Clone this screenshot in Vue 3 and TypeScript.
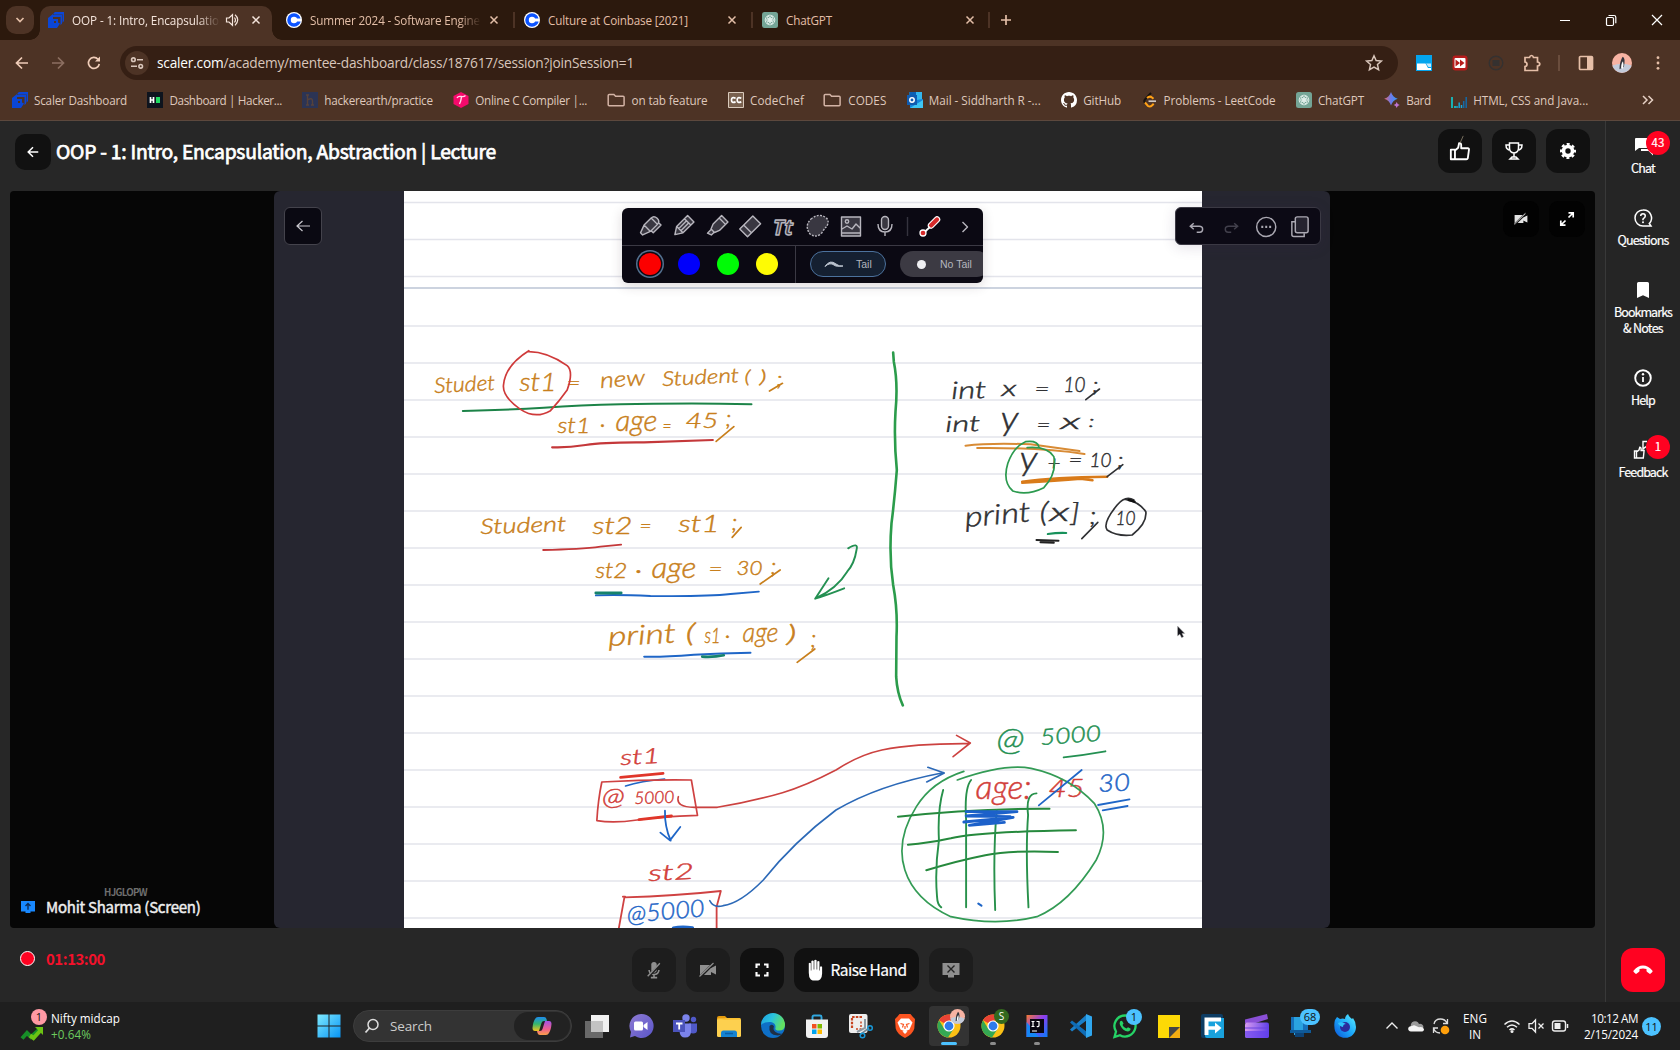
<script setup lang="ts">
// Spreads or tightens the letters of a label so that it takes up the given width.
const vFit = {
  mounted(el: HTMLElement, binding: { value: number }) {
    const natural = el.getBoundingClientRect().width
    const count = (el.textContent || '').trim().length
    if (count > 0) el.style.letterSpacing = `${(binding.value - natural) / count}px`
  },
}

interface Icon { box: string; body: string }

const chatgpt = '<rect width="16" height="16" rx="2.5" fill="#74a596"/><g fill="none" stroke="#e9f4f0" stroke-width=".8"><circle cx="8" cy="8" r="2"/><ellipse cx="8" cy="5.3" rx="2.6" ry="2.2"/><ellipse cx="8" cy="5.3" rx="2.6" ry="2.2" transform="rotate(60 8 8)"/><ellipse cx="8" cy="5.3" rx="2.6" ry="2.2" transform="rotate(120 8 8)"/><ellipse cx="8" cy="5.3" rx="2.6" ry="2.2" transform="rotate(180 8 8)"/><ellipse cx="8" cy="5.3" rx="2.6" ry="2.2" transform="rotate(240 8 8)"/><ellipse cx="8" cy="5.3" rx="2.6" ry="2.2" transform="rotate(300 8 8)"/></g>'
const folder = '<path d="M.2 3.400q0-1 1-1h4.700l1.700 1.800h7.500q1 0 1 1v7.500q0 1-1 1H1.200q-1 0-1-1z" fill="none" stroke="#d3b3a5" stroke-width="1.500"/>'
const chrome = '<circle cx="12" cy="12" r="11.500" fill="#fbc116"/><path d="M12 12L2 6.300A11.500 11.500 0 0 1 22.200 6.500H12z" fill="#ea4335"/><path d="M2 6.300A11.500 11.500 0 0 0 11 23.500L16.500 15 12 12 7 14.500z" fill="#34a853"/><circle cx="12" cy="12" r="5.600" fill="#fff"/><circle cx="12" cy="12" r="4.400" fill="#2f7bea"/>'
const penguin = '<circle cx="8" cy="8" r="8" fill="#f7b3a3"/><path d="M.3 10Q8 7 15.700 10A8 8 0 0 1 .3 10z" fill="#c3cbda"/><path d="M6 13q0-6 2.500-10 2.500 1 1 8z" fill="#33343c"/><path d="M7.300 12q0-4 1.500-5.500 1 3-.2 6z" fill="#fff"/>'
const camOff = '<path d="M2 5h11v3l5-2.500v9L13 12v3H2z" fill="currentColor"/><path d="M2 17L16 3" stroke="#1b1b1b" stroke-width="2.600"/><path d="M1.500 16.500L15.500 3" stroke="currentColor" stroke-width="1.200"/>'

const icons: Record<string, Icon> = {
  scaler: { box: '0 0 16 16', body: '<path d="M5.500 1.200L7 0h9v9l-1.500 1.800V2.300H5.500z" fill="#0b46d6"/><path d="M4.700 3.300L6 2.400h8v9l-1.500 1.800V5H4z" fill="#0b46d6"/><path d="M0 6l5-4v5H4v6h6v-2.500l2 1L9 16H0z" fill="#0b46d6"/><path d="M5 8h4v4H5z" fill="none" stroke="#0b46d6" stroke-width="2"/>' },
  coinbase: { box: '0 0 16 16', body: '<circle cx="8" cy="8" r="8" fill="#fff"/><circle cx="8" cy="8" r="5" fill="none" stroke="#0b53ff" stroke-width="3.600"/><path d="M9 6.500h6v3H9z" fill="#fff"/>' },
  chatgpt: { box: '0 0 16 16', body: chatgpt },
  hr: { box: '0 0 16 16', body: '<path d="M0 0h16v16H0z" fill="#0e141e"/><path d="M3.500 5v6M6.500 5v6M3 8h4" stroke="#fff" stroke-width="1.700"/><path d="M9 5h4v6H9z" fill="#1fdc62"/>' },
  he: { box: '0 0 16 16', body: '<path d="M0 0h16v16H0z" fill="#2c3454"/><path d="M5.500 3v10M5.500 8q5-3 5 1v4M4 3h3M4 13h3M9 13h3" fill="none" stroke="#56423b" stroke-width="1.400"/>' },
  compiler: { box: '0 0 16 16', body: '<path d="M8 0l7.500 4v8L8 16 .5 12V4z" fill="#f50a6c"/><path d="M4 6q1-2 4-1.500 3 .5 4.500-1M8.500 5Q8 9 6.500 12" fill="none" stroke="#ffd9e8" stroke-width="1.400"/>' },
  folder: { box: '0 0 16 16', body: folder },
  cc: { box: '0 0 16 16', body: '<path d="M.5.5h15v15H.5z" fill="#79614f" stroke="#d9cabc"/><path d="M7.600 6.200Q3.500 4.500 3.500 8t4.100 1.900M13.300 6.200Q9.200 4.500 9.200 8t4.100 1.900" fill="none" stroke="#fff" stroke-width="1.700"/>' },
  outlook: { box: '0 0 16 16', body: '<path d="M2.500 0H15v8H2.500z" fill="#33b6ee"/><path d="M2.500 0H9v5H2.500z" fill="#0b5fb4"/><path d="M3 9l13-2v9H3z" fill="#1385dd"/><path d="M3 16L16 8v8z" fill="#3ec6f5"/><path d="M0 3h10v10H0z" fill="#0f5bb0"/><circle cx="5" cy="8" r="2.200" fill="none" stroke="#fff" stroke-width="1.500"/>' },
  github: { box: '0 0 16 16', body: '<path fill="#fff" d="M8 0C3.580 0 0 3.580 0 8c0 3.540 2.290 6.530 5.470 7.590.4.070.55-.17.55-.38 0-.19-.01-.82-.01-1.490-2.010.37-2.530-.49-2.690-.94-.09-.23-.48-.94-.82-1.130-.28-.15-.68-.52-.01-.53.63-.01 1.080.58 1.230.82.72 1.210 1.870.87 2.330.66.070-.52.28-.87.51-1.070-1.780-.2-3.640-.89-3.640-3.950 0-.87.31-1.590.82-2.150-.08-.2-.36-1.020.08-2.120 0 0 .67-.21 2.200.82.64-.18 1.320-.27 2-.27s1.360.09 2 .27c1.530-1.040 2.200-.82 2.200-.82.44 1.100.16 1.920.08 2.120.51.56.82 1.270.82 2.150 0 3.070-1.870 3.750-3.650 3.950.29.25.54.73.54 1.480 0 1.070-.01 1.930-.01 2.200 0 .21.15.46.55.38A8 8 0 0 0 16 8c0-4.420-3.580-8-8-8z"/>' },
  leet: { box: '0 0 16 16', body: '<path d="M9 1L3 7.500q-1.500 1.700 0 3.500" fill="none" stroke="#15110f" stroke-width="2"/><path d="M3 10.500L6 14q2 1.500 4.500-1l1.200-1.200M5 6q2.800-2.500 5-.5l1.500 1.300" fill="none" stroke="#ffa116" stroke-width="2"/><path d="M6.500 9.200H14" stroke="#cfc8c3" stroke-width="1.700"/>' },
  bard: { box: '0 0 16 16', body: '<defs><linearGradient id="bard"><stop offset="0" stop-color="#e06a74"/><stop offset=".5" stop-color="#6d7bea"/><stop offset="1" stop-color="#2f9bf5"/></linearGradient></defs><path d="M7 0Q8.500 5 13.700 6.700 8.500 8.500 7 13.400 5.500 8.500.2 6.700 5.500 5 7 0z" fill="url(#bard)"/><path d="M12.700 10q.6 2.400 3 3-2.400.6-3 3-.6-2.400-3-3 2.400-.6 3-3z" fill="#c074d3"/>' },
  bars: { box: '0 0 16 16', body: '<path d="M1 5v11M4 14v2" stroke="#14bfc2" stroke-width="1.800"/><path d="M6 14v2M8.200 10.500V16M10.500 13v3" stroke="#1aa6d8" stroke-width="1.500"/><path d="M12.700 9v7M15.200 5v11" stroke="#1469a8" stroke-width="1.500"/>' },
  back: { box: '0 0 16 16', body: '<path d="M14 8H2.500M8 2.500L2.500 8 8 13.500" fill="none" stroke="currentColor" stroke-width="1.700"/>' },
  thinBack: { box: '0 0 16 16', body: '<path d="M15 8H2M7.500 3L2 8l5.500 5" fill="none" stroke="currentColor" stroke-width="1.200"/>' },
  forward: { box: '0 0 16 16', body: '<path d="M2 8h11.500M8 2.500L13.500 8 8 13.500" fill="none" stroke="currentColor" stroke-width="1.700"/>' },
  reload: { box: '0 0 16 16', body: '<path d="M13.300 9A5.500 5.500 0 1 1 12 4.200" fill="none" stroke="currentColor" stroke-width="1.700"/><path d="M14 1.500v5H9z" fill="currentColor"/>' },
  tune: { box: '0 0 16 16', body: '<g fill="none" stroke="currentColor" stroke-width="1.600"><circle cx="4.400" cy="4.700" r="1.800"/><path d="M8 4.700h6M2 11.300h6"/><circle cx="11.700" cy="11.300" r="1.800"/></g>' },
  star: { box: '0 0 16 16', body: '<path d="M8 1.500l1.900 4.300 4.700.5L11.100 9.400l1 4.600L8 11.600 3.900 14l1-4.600L1.400 6.300l4.700-.5z" fill="none" stroke="currentColor" stroke-width="1.300"/>' },
  down: { box: '0 0 16 16', body: '<path d="M4.500 6L8 9.500 11.500 6" fill="none" stroke="currentColor" stroke-width="1.700"/>' },
  close: { box: '0 0 16 16', body: '<path d="M4.500 4.500l7 7m0-7l-7 7" stroke="currentColor" stroke-width="1.500"/>' },
  plus: { box: '0 0 16 16', body: '<path d="M8 3v10M3 8h10" stroke="currentColor" stroke-width="1.700"/>' },
  speaker: { box: '0 0 16 16', body: '<path d="M2.500 6h2.500l3.500-3.300v10.600L5 10H2.500z" fill="none" stroke="currentColor" stroke-width="1.200"/><path d="M10.500 5.500q2 2.500 0 5M11 2.700q5.500 4.600 0 10.600" fill="none" stroke="currentColor" stroke-width="1.200"/>' },
  min: { box: '0 0 16 16', body: '<path d="M3 8.500h10" stroke="#fff"/>' },
  restore: { box: '0 0 16 16', body: '<rect x="3.500" y="5.500" width="7" height="8" rx="1.200" fill="none" stroke="#fff" stroke-width="1.200"/><path d="M5.500 3.500H11q1.800 0 1.800 1.800v6" fill="none" stroke="#fff" stroke-width="1.200"/>' },
  winclose: { box: '0 0 16 16', body: '<path d="M3 3l10 10M13 3L3 13" stroke="#fff" stroke-width="1.200"/>' },
  extBlue: { box: '0 0 16 16', body: '<path d="M0 0h16v16H0z" fill="#04a5ee"/><path d="M1 8.500h8.500L12 13h3v2H1z" fill="#fff"/><path d="M10 8.500h5V12h-2.500z" fill="#c3e9fb"/>' },
  extRed: { box: '0 0 16 16', body: '<rect x=".5" y=".5" width="15" height="15" rx="3" fill="#b71c1c"/><rect x="2.500" y="3" width="11" height="10" rx="1" fill="#fff"/><path d="M3.500 4.500L8 8l-4.500 3.500zM8 4.500L12.500 8 8 11.500z" fill="#b71c1c"/>' },
  extDark: { box: '0 0 16 16', body: '<circle cx="8" cy="8" r="6.800" fill="none" stroke="#353130" stroke-width="1.400"/><path d="M4.500 5h7v6h-7z" fill="#353130"/>' },
  puzzle: { box: '0 0 18 18', body: '<path d="M2 3.500h4.500Q7 1.500 8.500 1.500t2 2h4v4.500q2.300.3 2.300 2t-2.300 2v4.500H2v-4q2-.3 2-2.300t-2-2.200z" fill="none" stroke="#e6bfa8" stroke-width="1.700"/>' },
  panel: { box: '0 0 16 16', body: '<rect x="1.500" y="1.500" width="13" height="13" rx="1" fill="none" stroke="#e6bfa8" stroke-width="1.700"/><path d="M9 2h5.500v12H9z" fill="#e6bfa8"/>' },
  dots: { box: '0 0 16 16', body: '<g fill="#e6bfa8"><circle cx="8" cy="2.700" r="1.400"/><circle cx="8" cy="8" r="1.400"/><circle cx="8" cy="13.300" r="1.400"/></g>' },
  penguin: { box: '0 0 16 16', body: penguin },
  more: { box: '0 0 16 16', body: '<path d="M3 4l4 4-4 4M8.500 4l4 4-4 4" fill="none" stroke="#e6d1c5" stroke-width="1.500"/>' },
  thumb: { box: '0 0 24 24', body: '<path d="M2 10.500h4.500v10.500H2zM6.500 11.500l3.500-3 1-5q2.300-.3 2.300 2V9h7.200q1.500 0 1.300 1.500L20.500 20q-.3 1-1.500 1H6.500" fill="none" stroke="#fff" stroke-width="2" stroke-linejoin="round"/><path d="M12 3.500L15.500-4.500" stroke="#9a8f78" stroke-width=".8"/>' },
  trophy: { box: '0 0 20 20', body: '<path d="M5.500 2h9v5q0 4.500-4.500 5-4.500-.5-4.500-5zM5.500 4H2q0 5 4.500 5.200M14.500 4H18q0 5-4.500 5.200M10 12v4M6 18h8l-2-2H8z" fill="none" stroke="#fff" stroke-width="1.500"/>' },
  gear: { box: '0 0 20 20', body: '<circle cx="10" cy="10" r="5" fill="none" stroke="#fff" stroke-width="4"/><circle cx="10" cy="10" r="7.700" fill="none" stroke="#fff" stroke-width="2.400" stroke-dasharray="3.350 2.698" stroke-dashoffset="1.675"/>' },
  camOff: { box: '0 0 20 20', body: camOff },
  expand: { box: '0 0 16 16', body: '<path d="M9.500 1.800h4.700v4.700M14 2L9.500 6.500M6.500 14.200H1.800V9.500M2 14l4.500-4.500" fill="none" stroke="#fff" stroke-width="1.700"/>' },
  micOff: { box: '0 0 20 20', body: '<path d="M7 4a3 3 0 0 1 6 0v6a3 3 0 0 1-6 0z" fill="currentColor"/><path d="M4.500 10q.5 5 5.500 5t5.500-5M10 15v3M6.500 18.500h7" fill="none" stroke="currentColor" stroke-width="1.800"/><path d="M4 17L17 3.500" stroke="#1d1d1d" stroke-width="2.800"/><path d="M3 17L16.500 2.500" stroke="currentColor" stroke-width="1.500"/>' },
  full: { box: '0 0 16 16', body: '<path d="M2.500 6V2.500H6M10 2.500h3.500V6M13.500 10v3.500H10M6 13.500H2.500V10" fill="none" stroke="#fff" stroke-width="2.100"/>' },
  hand: { box: '0 0 18 24', body: '<path d="M2 4.500q1.500-1.200 2.300 0v8h.6V2q1.400-1.500 2.600 0v9.500h.7V1q1.400-1.200 2.600 0v10.500h.7V2.500q1.300-1.300 2.500 0v10h.6V8.500q1.200-1.500 2.400 0V16q0 4-2 6.500-1 1.300-2.500 1.300H6.500q-1.500 0-2.500-1.300Q2 20 2 15z" fill="#fff"/>' },
  shareOff: { box: '0 0 20 20', body: '<path d="M1.500 3h17v12H13v2.500H7V15H1.500z" fill="currentColor"/><path d="M6.500 5.500l7 7m0-7l-7 7" stroke="#242424" stroke-width="1.400"/>' },
  share: { box: '0 0 14 14', body: '<path d="M0 1h14v10.500H9.500v1.500h-5v-1.500H0z" fill="#1888ff"/><path d="M7 9.800V3.500M4.500 6L7 3.500 9.500 6" fill="none" stroke="#0b2b55" stroke-width="1.400"/>' },
  phone: { box: '0 0 20 12', body: '<path d="M.7 6.500Q5 1.500 10 1.500t9.300 5q.7.800 0 1.500l-1.600 1.600q-.7.600-1.500 0l-2-1.500q-.7-.5-.7-1.400V5Q10 4 6.500 5v1.700q0 .9-.7 1.400l-2 1.500q-.8.600-1.500 0L.7 8q-.7-.7 0-1.500z" fill="#fff"/>' },
  chat: { box: '0 0 20 20', body: '<path d="M2 3q0-1 1-1h13v10H6l-4 3z" fill="#fff"/><path d="M8 14h8l3 3V6" fill="none" stroke="#fff" stroke-width="2"/>' },
  question: { box: '0 0 20 20', body: '<path d="M10 2a8 8 0 1 0 0 16h8l-1.700-2.500A8 8 0 0 0 10 2z" fill="none" stroke="#fff" stroke-width="1.500"/><path d="M7.700 8q0-2.300 2.300-2.300T12.300 8q0 1.300-2.300 3v1.200" fill="none" stroke="#fff" stroke-width="1.500"/><circle cx="10" cy="14.300" r="1" fill="#fff"/>' },
  bookmark: { box: '0 0 20 20', body: '<path d="M4 3.500Q4 2 5.500 2h9Q16 2 16 3.500V18l-6-2.700L4 18z" fill="#fff"/>' },
  help: { box: '0 0 20 20', body: '<circle cx="10" cy="10" r="7.800" fill="none" stroke="#fff" stroke-width="1.900"/><path d="M10 9v5" stroke="#fff" stroke-width="1.800"/><circle cx="10" cy="6.300" r="1.200" fill="#fff"/>' },
  feedback: { box: '0 0 20 20', body: '<path d="M1.500 11h2v7h-2zM3.500 12L6 10l.8-2.700q1.500 0 1.300 2v1.200h3l-.8 7.500H3.500M14 1.500h-4V9l2.500-2h5" fill="none" stroke="#fff" stroke-width="1.400"/>' },
  win: { box: '0 0 24 24', body: '<defs><linearGradient id="wn" x2="1" y2="1" gradientUnits="objectBoundingBox"><stop offset="0" stop-color="#7eeaff"/><stop offset="1" stop-color="#0794f5"/></linearGradient></defs><path d="M.5.5H11.500v11H.5zM12.500.5H23.500v11H12.500zM.5 12.500H11.500v11H.5zM12.500 12.500H23.500v11H12.500z" fill="url(#wn)"/>' },
  search: { box: '0 0 16 16', body: '<circle cx="9" cy="6.500" r="5" fill="none" stroke="#ddd" stroke-width="1.500"/><path d="M5.500 10L1.500 14.500" stroke="#ddd" stroke-width="1.800"/>' },
  copilot: { box: '0 0 20 20', body: '<defs><linearGradient id="cpa" x2="0" y2="1"><stop offset="0" stop-color="#1d8cf0"/><stop offset=".5" stop-color="#36b56b"/><stop offset="1" stop-color="#f3c21e"/></linearGradient><linearGradient id="cpb" x2="0" y2="1"><stop offset="0" stop-color="#a352e6"/><stop offset=".6" stop-color="#f0608a"/><stop offset="1" stop-color="#f9a04a"/></linearGradient></defs><path d="M6 1h6q2 0 2.500 2L15 5h-3q-2 0-2.500 2L7 15H3Q.5 15 .5 12 1 6 3 3 4 1 6 1z" fill="url(#cpa)"/><path d="M14 19H8q-2 0-2.500-2L5 15h3q2 0 2.500-2L13 5h4q2.500 0 2.500 3-.5 6-2.500 9-1 2-3 2z" fill="url(#cpb)"/>' },
  taskview: { box: '0 0 24 24', body: '<path d="M6 1h18v17H6z" fill="#f1f1f1"/><path d="M0 7h18v17H0z" fill="#777" opacity=".85"/><path d="M6 7h12v11H6z" fill="#c3c3c3"/>' },
  meet: { box: '0 0 24 24', body: '<defs><linearGradient id="mt" x2="1" y2="1"><stop offset="0" stop-color="#8e7bd3"/><stop offset="1" stop-color="#5a55c9"/></linearGradient></defs><path d="M12 0a12 12 0 1 1-6 22L1 23.500 2 18A12 12 0 0 1 12 0z" fill="url(#mt)"/><rect x="5" y="7.500" width="9" height="9" rx="1.500" fill="#fff"/><path d="M14.500 11l4-3v8l-4-3z" fill="#fff"/>' },
  teams: { box: '0 0 24 24', body: '<circle cx="13" cy="4" r="3.700" fill="#7b83eb"/><circle cx="20.500" cy="5.500" r="2.700" fill="#5059c9"/><path d="M16 9.500h8v7q0 3-4 3-3 0-4-2z" fill="#5059c9"/><path d="M7 9.500h11v8q0 6-6 6-5 0-5.500-6z" fill="#7b83eb"/><path d="M0 6h12v12H0z" fill="#4b53bc"/><path d="M3 9.500h6.500M6.200 9.500v6" stroke="#fff" stroke-width="1.800"/>' },
  explorer: { box: '0 0 24 24', body: '<path d="M0 4q0-2 2-2h6l3 3H0z" fill="#e59a0c"/><rect y="4.500" width="24" height="18.500" rx="1.500" fill="#fdd04f"/><path d="M0 6V5q5 2 9-1h13.500q1.500 0 1.500 1.500z" fill="#fbc02f"/><path d="M4 23v-4q0-2.500 2.500-2.500h11Q20 16.500 20 19v4z" fill="#1583d1"/><path d="M8 19.500h8" stroke="#0b5ea6" stroke-width="1.500"/>' },
  edge: { box: '0 0 24 24', body: '<defs><linearGradient id="ed" x2="1" y2=".4"><stop offset="0" stop-color="#1b9de2"/><stop offset=".5" stop-color="#2ac3dd"/><stop offset="1" stop-color="#63e060"/></linearGradient></defs><circle cx="12" cy="12" r="12" fill="#0e6fc7"/><path d="M0 11A12 12 0 0 1 24 11q0 5.500-6 5.500-4.500 0-3.500-3Q15 9 10 8 3 7.500 0 11z" fill="url(#ed)"/><path d="M8.500 12q-1.500 9 8 9.500 3 0 5-2-4 .7-7-1.500-3-2.500-1.500-5.500Q11.500 9.500 8.500 12z" fill="#1f2f45"/>' },
  store: { box: '0 0 24 24', body: '<path d="M7.500 7V3q0-1.500 1.500-1.500h6q1.500 0 1.500 1.500v4" fill="none" stroke="#31a8e0" stroke-width="1.900"/><path d="M1 5.500h22V21q0 3-3 3H4q-3 0-3-3z" fill="#f2f2f2"/><path d="M7 10h4.500v4.500H7z" fill="#f25022"/><path d="M12.500 10H17v4.500h-4.500z" fill="#7fba00"/><path d="M7 15.500h4.500V20H7z" fill="#00a4ef"/><path d="M12.500 15.500H17V20h-4.500z" fill="#ffb900"/>' },
  snip: { box: '0 0 24 24', body: '<rect width="18.500" height="19" rx="2" fill="#eee"/><path d="M3 14V3h11" fill="none" stroke="#c74420" stroke-width="2.200" stroke-dasharray="2.500 1.200"/><path d="M7 15h5V7" fill="none" stroke="#c74420" stroke-width="1.500" stroke-dasharray="2 1.500"/><path d="M16 5v9l-8 4" fill="none" stroke="#8c98a2" stroke-width="2"/><path d="M12 20l8-6" stroke="#738490" stroke-width="1.600"/><circle cx="21" cy="14" r="2.300" fill="none" stroke="#1898d8" stroke-width="1.500"/><circle cx="13.500" cy="21.500" r="2.300" fill="none" stroke="#1898d8" stroke-width="1.500"/>' },
  brave: { box: '0 0 24 24', body: '<path d="M6.500 0h11l2 2.500L22 5l-.7 9.500Q20 20 12 24 4 20 2.700 14.500L2 5l2.500-2.500z" fill="#fb5420"/><path d="M8 4.500h8l3.500 4-3 7-4.500 2-4.500-2-3-7z" fill="#fff"/><path d="M7.500 9.500l3 1-1 3M16.500 9.500l-3 1 1 3M12 12v3" fill="none" stroke="#fb5420" stroke-width="1.200"/><path d="M9.500 17.500l2.500-1 2.500 1L12 20z" fill="#fff"/>' },
  chrome: { box: '0 0 24 24', body: chrome },
  idea: { box: '0 0 24 24', body: '<defs><linearGradient id="ij" x2="1" y2="1"><stop offset="0" stop-color="#f97a2f"/><stop offset=".45" stop-color="#8b3df0"/><stop offset="1" stop-color="#087cfa"/></linearGradient></defs><path d="M1.500 1h21v22h-21z" fill="url(#ij)"/><path d="M1.500 8v15H14z" fill="#1587f5"/><path d="M5 5h14v14H5z" fill="#0a0610"/><path d="M6.500 7.500H9.500M8 7.500v5M6.500 12.500H9.500M11.500 7.500H14v4q0 1.300-2.300 1M7 17h5" fill="none" stroke="#fff" stroke-width="1.200"/>' },
  vscode: { box: '0 0 24 24', body: '<path d="M17 1L1 15.500l2 2L22 3z" fill="#1a7fc8"/><path d="M17 23L1 8.500l2-2L22 21z" fill="#0f6cb5"/><path d="M17 0l6 2.500v19L17 24z" fill="#2fa7ef"/><path d="M17 7.500L11 12l6 4.500z" fill="#202020"/>' },
  whatsapp: { box: '0 0 24 24', body: '<path d="M12 1.500a10.500 10.500 0 1 1-5 19.700L1.500 23 3 17.500A10.500 10.500 0 0 1 12 1.500z" fill="none" stroke="#25d366" stroke-width="2.300"/><path d="M7 7.500q2-2 3 1l.5 1-1 1.500q1 2.500 4 3.500l1.500-1.300 2.500 1.300q.5 2-2.500 3Q10 17 7 11q-.7-2 0-3.500z" fill="#25d366"/>' },
  sticky: { box: '0 0 24 24', body: '<path d="M1 1h22v12L12 24H1z" fill="#fdd906"/><path d="M12 13h11v11H12z" fill="#f4ad12"/><path d="M12 13h11L12 24z" fill="#454545"/>' },
  filmora: { box: '0 0 24 24', body: '<rect width="22" height="24" x="0" rx="2" fill="#0d3c63"/><path d="M4 4h19v20H6q-2 0-2-2z" fill="#19a2dd"/><path d="M5.500 21V5.500H20" fill="none" stroke="#fff" stroke-width="4"/><path d="M6 14h10" stroke="#fff" stroke-width="3.500"/><path d="M14 8.500l6.500 5.500-6.500 5.500z" fill="#fff"/>' },
  clip: { box: '0 0 24 24', body: '<defs><linearGradient id="cl" x2="1"><stop offset="0" stop-color="#d89af0"/><stop offset="1" stop-color="#5e3fe8"/></linearGradient></defs><path d="M0 5.500L22 0l1 5-12.500 4H0z" fill="#8a4fd6"/><rect y="8.500" width="24" height="15.500" rx="2" fill="url(#cl)"/><path d="M0 14h24" stroke="#6a42df" stroke-width="1"/><path d="M0 17h24v5q0 2-2 2H2q-2 0-2-2z" fill="#6440ee" opacity=".7"/>' },
  phoneLink: { box: '0 0 24 24', body: '<path d="M2 3h17v15H2z" fill="#1671bb"/><path d="M5 3h9v18H5z" fill="#2aa3e0"/><path d="M1 16h21v3H1z" fill="#0f5a99"/><path d="M6 19h9v4H6z" fill="#0d4478"/>' },
  firefox: { box: '0 0 24 24', body: '<defs><linearGradient id="ff" x1="1" x2="0" y2="1"><stop offset="0" stop-color="#5ff2ff"/><stop offset=".5" stop-color="#1ca8fa"/><stop offset="1" stop-color="#0b52d6"/></linearGradient></defs><path d="M2 6l2-3 3 2q3-1 5 0 0-3 3-5 1 3 4 5l1-1q3 4 3 9a10.800 10.800 0 0 1-21.600 0Q1 9 2 6z" fill="url(#ff)"/><circle cx="12" cy="13" r="5" fill="#2a2b9e"/><path d="M5 9q4-2 8 1-3 0-3 3-4-1-5-4z" fill="#2ec3fb"/>' },
  up: { box: '0 0 16 16', body: '<path d="M2.500 10.500L8 5l5.500 5.500" fill="none" stroke="#eee" stroke-width="1.400"/>' },
  cloud: { box: '0 0 16 16', body: '<path d="M3 9a4 4 0 0 1 8-3 3.500 3.500 0 0 1 4.500 3.500l-3 2z" fill="#9a9a9a"/><path d="M3 13.500Q0 13 .2 10.500T4 8q2-1.500 4 0l3 1.200q4-1 5 2 0 2.300-3 2.300z" fill="#f5f5f5"/>' },
  sync: { box: '0 0 18 18', body: '<path d="M2 7Q3 2 8.500 2 13 2 15 6M15.500 2v4.500H11M8 16q-5 0-6.500-5M1.500 16v-5H6" fill="none" stroke="#ddd" stroke-width="1.300"/><circle cx="13" cy="13" r="4.300" fill="#ff9f0a"/>' },
  wifi: { box: '0 0 18 16', body: '<g fill="none" stroke="#eee" stroke-width="1.500"><path d="M1.500 6.500q7.500-7 15 0M4 9.300q5-4.600 10 0M6.500 12q2.500-2.300 5 0"/></g><circle cx="9" cy="13.500" r="1.500" fill="#eee"/>' },
  mute: { box: '0 0 18 16', body: '<path d="M2 5.700h3L8.500 2v12L5 10.300H2z" fill="none" stroke="#eee" stroke-width="1.300"/><path d="M11.500 5.500l5 5m0-5l-5 5" stroke="#eee" stroke-width="1.300"/>' },
  battery: { box: '0 0 18 16', body: '<rect x="1.500" y="3" width="13" height="10" rx="2.200" fill="none" stroke="#eee" stroke-width="1.400"/><path d="M3.500 5h6v6h-6z" fill="#eee"/><path d="M16.500 6v4" stroke="#eee" stroke-width="1.500"/>' },
  stock: { box: '0 0 22 14', body: '<path d="M1 12.500L6 7l4 4 9-8" fill="none" stroke="#178f28" stroke-width="4"/><path d="M9 9.500l3.500 2.500L19 5" fill="none" stroke="#6cc313" stroke-width="4"/><path d="M14 1h8v8z" fill="#6cc313"/>' },
}

const tabs = [
  { icon: 'scaler', title: 'OOP - 1: Intro, Encapsulatio', w: 147, room: 148, fade: true, active: true },
  { icon: 'coinbase', title: 'Summer 2024 - Software Engine', w: 170, room: 171, fade: true, active: false },
  { icon: 'coinbase', title: 'Culture at Coinbase [2021]', w: 140, room: 171, fade: false, active: false },
  { icon: 'chatgpt', title: 'ChatGPT', w: 46, room: 171, fade: false, active: false },
]

const bookmarks = [
  { icon: 'scaler', text: 'Scaler Dashboard', w: 93 },
  { icon: 'hr', text: 'Dashboard | Hacker...', w: 112.5 },
  { icon: 'he', text: 'hackerearth/practice', w: 108.5 },
  { icon: 'compiler', text: 'Online C Compiler |...', w: 112 },
  { icon: 'folder', text: 'on tab feature', w: 76 },
  { icon: 'cc', text: 'CodeChef', w: 54 },
  { icon: 'folder', text: 'CODES', w: 38 },
  { icon: 'outlook', text: 'Mail - Siddharth R -...', w: 112 },
  { icon: 'github', text: 'GitHub', w: 38 },
  { icon: 'leet', text: 'Problems - LeetCode', w: 112 },
  { icon: 'chatgpt', text: 'ChatGPT', w: 46 },
  { icon: 'bard', text: 'Bard', w: 24.5 },
  { icon: 'bars', text: 'HTML, CSS and Java...', w: 115 },
]

const sidebar = [
  { icon: 'chat', lines: [['Chat', 24]], badge: '43' },
  { icon: 'question', lines: [['Questions', 51]], badge: '' },
  { icon: 'bookmark', lines: [['Bookmarks', 58], ['& Notes', 40]], badge: '' },
  { icon: 'help', lines: [['Help', 24]], badge: '' },
  { icon: 'feedback', lines: [['Feedback', 49]], badge: '1' },
] as { icon: string; lines: [string, number][]; badge: string }[]

const apps = [
  { icon: 'taskview' }, { icon: 'meet' }, { icon: 'teams' }, { icon: 'explorer' }, { icon: 'edge' },
  { icon: 'store' }, { icon: 'snip' }, { icon: 'brave' },
  { icon: 'chrome', state: 'active', mark: 'penguin' },
  { icon: 'chrome', state: 'open', mark: 'S' },
  { icon: 'idea', state: 'open' }, { icon: 'vscode' }, { icon: 'whatsapp', badge: '1' },
  { icon: 'sticky' }, { icon: 'filmora' }, { icon: 'clip' }, { icon: 'phoneLink', badge: '68' }, { icon: 'firefox' },
] as { icon: string; state?: string; mark?: string; badge?: string }[]

const rules = [202.5, 239.5, 276.5, 326, 363, 400, 437, 474, 511, 548, 585, 622, 659, 696, 733, 770, 807, 844, 881, 918]

const O = '#c87f1c', K = '#2f3033', R = '#d2403a', G = '#249052', B = '#1f66c7'
// Handwritten words on the page: text, x, baseline, width, size, ink, tilt.
const words: [string, number, number, number, number, string, number][] = [
  ['Studet', 434, 393, 61, 21, O, -3], ['st1', 519, 391, 37, 25, O, 0], ['=', 566, 390, 14, 22, O, 0],
  ['new', 600, 388, 45, 22, O, -4], ['Student', 662, 386, 77, 20, O, -3], ['(', 744, 383, 6, 18, O, 0], [')', 759, 383, 7, 18, O, 0], [';', 776, 386, 6, 20, O, 0],
  ['st1', 557, 433, 33, 22, O, 0], ['·', 599, 433, 6, 26, O, 0], ['age', 615, 431, 42, 29, O, 0], ['=', 662, 432, 9, 18, O, 0], ['45', 685, 428, 33, 22, O, 0], [';', 725, 426, 6, 22, O, 0],
  ['Student', 480, 534, 86, 21, O, -2], ['st2', 592, 534, 40, 23, O, 0], ['=', 639, 533, 12, 19, O, 0], ['st1', 678, 532, 41, 24, O, 0], [';', 731, 530, 6, 22, O, 0],
  ['st2', 595, 578, 32, 22, O, 0], ['·', 634, 580, 8, 28, O, 0], ['age', 651, 578, 45, 29, O, 0], ['=', 708, 576, 14, 21, O, 0], ['30', 736, 575, 26, 20, O, 0], [';', 770, 574, 6, 22, O, 0],
  ['print', 608, 646, 68, 27, O, -3], ['(', 685, 642, 10, 26, O, 0], ['s1', 704, 643, 16, 22, O, 0], ['·', 724, 644, 6, 24, O, 0], ['age', 742, 642, 36, 28, O, 0], [')', 786, 642, 10, 24, O, 0], [';', 810, 647, 6, 24, O, 0],
  ['int', 951, 399, 35, 24, K, -2], ['x', 1001, 396, 15, 21, K, 0], ['=', 1034, 396, 15, 22, K, 0], ['10', 1063, 392, 22, 21, K, 0], [';', 1092, 392, 6, 20, K, 0],
  ['int', 945, 432, 35, 22, K, -2], ['y', 1000, 430, 18, 33, K, 0], ['=', 1036, 432, 14, 21, K, 0], ['x', 1060, 429, 20, 21, K, 0], [':', 1088, 427, 6, 15, K, 0],
  ['y', 1019, 470, 18, 33, K, 0], ['+', 1047, 470, 13, 20, K, 0], ['=', 1068, 467, 14, 21, K, 0], ['10', 1089, 467, 22, 20, K, 0], [';', 1117, 467, 6, 20, K, 0],
  ['print', 965, 527, 66, 28, K, -5], ['(', 1039, 522, 9, 28, K, 0], ['x', 1049, 521, 20, 25, K, 0], [']', 1070, 522, 9, 26, K, 0], [';', 1089, 524, 7, 24, K, 0], ['10', 1115, 525, 20, 20, K, 0],
  ['st1', 620, 765, 40, 21, R, -3], ['@', 602, 806, 23, 24, R, -5], ['5000', 634, 804, 40, 17, R, -2], ['st2', 648, 881, 46, 22, R, -3], ['@5000', 627, 923, 78, 24, B, -5],
  ['@', 996, 750, 28, 31, G, 0], ['5000', 1040, 745, 61, 22, G, -4], ['age:', 975, 799, 56, 33, R, 0], ['45', 1048, 797, 36, 26, R, 0], ['30', 1098, 792, 32, 24, B, -3],
]

// Pen strokes, each drawn in its own thirds-of-a-pixel grid: d, ink, thickness.
const upper: [string, string, number][] = [
  ['M187 243Q320 240 430 233T660 223 960 221L1053 223', '#1c8348', 2],
  ['M385 62Q315 105 309 165 305 200 360 238 405 268 450 242 475 215 500 180 520 125 500 107 440 65 385 65', '#cf3a3a', 1.7],
  ['M455 352Q500 354 555 345T730 337L937 330', '#c4383a', 2.2],
  ['M428 660Q540 658 600 650L662 644', '#c4383a', 1.800],
  ['M586 796Q650 793 750 798 920 800 990 792L1075 785', B, 1.900],
  ['M586 789h76', '#16836c', 2.800],
  ['M731 980Q780 982 880 974 960 970 1050 968', B, 2],
  ['M905 980Q940 982 970 976', '#16836c', 2.600],
  ['M1107 183L1146 160M947 334L1000 290M995 622L1022 592M1079 762L1139 720M1190 997L1243 957', O, 1.700],
  ['M1343 655Q1375 635 1368 660 1362 700 1340 725 1310 775 1244 806L1284 745M1244 806Q1280 795 1331 775', G, 1.900],
  ['M1478 68L1480 95Q1493 160 1485 245 1480 330 1489 420 1482 510 1473 580 1465 680 1478 765 1492 840 1488 920L1487 1040Q1490 1090 1507 1126', '#2b9c4b', 2.600],
]
const right: [string, string, number][] = [
  ['M255 347Q330 338 450 343L597 363M290 354Q480 352 612 372', '#d88b35', 2],
  ['M425 455Q520 442 680 440M425 458Q530 452 600 446L636 451', '#d97b1a', 2.500],
  ['M475 350Q470 330 435 335 400 350 382 400 365 455 397 483 440 498 490 473 530 430 520 380 500 348 440 353', '#2c9a4f', 1.700],
  ['M502 612Q530 608 557 609', '#16915a', 2.200],
  ['M468 630L534 632M480 637L520 638', '#222', 2],
  ['M616 209L657 177M680 440L727 404M604 626L652 577', K, 1.600],
  ['M760 510Q735 495 710 525 665 580 680 600 710 620 755 615 800 580 796 545 775 515 735 508', K, 1.700],
  ['M745 510L762 515', '#111', 2.500],
]
const lower: [string, string, number][] = [
  ['M157 232Q210 226 268 220', '#e0362a', 2.800], ['M170 258Q210 243 272 237', B, 1.700],
  ['M108 246Q230 238 342 240L358 346Q260 350 200 360 140 370 95 362 98 300 108 246', '#cf4242', 1.700],
  ['M205 359L290 348', '#e0362a', 2.800],
  ['M308 290Q300 322 350 322H410Q500 305 580 278 640 258 720 210 780 165 840 150 930 130 1065 131M1035 106L1071 129 1026 170', '#cc4240', 1.600],
  ['M273 332Q272 380 288 422M261 398L286 421 313 381', B, 1.800],
  ['M150 700L167 592Q300 588 419 573L408 620V700M163 590h6', '#cf4242', 1.800],
  ['M390 602Q400 625 425 617 470 610 530 540 610 425 720 330 830 255 1000 218M960 202L1003 219 957 246', '#2c69b7', 1.600],
  ['M1037 240Q1160 190 1230 205 1330 230 1395 310 1440 390 1400 480 1330 610 1245 650 1140 680 1020 650 925 600 900 510 875 420 930 320 970 245 1054 214', '#339b55', 1.700],
  ['M1315 172Q1370 165 1424 154', G, 1.900],
  ['M882 350Q1080 325 1278 326M908 434Q960 430 1020 415 1090 395 1347 391M956 511Q1040 482 1110 466T1300 456', '#26893d', 2],
  ['M1000 270Q985 330 989 420 978 510 984 590 985 615 995 622M1073 240Q1055 265 1060 360V622M1140 330Q1130 460 1136 630M1244 280Q1215 280 1222 345 1215 450 1223 622', '#28914b', 1.900],
  ['M1060 335L1193 335 1060 348 1175 350M1054 366L1183 352 1068 376 1160 367', '#1c61ca', 2.800],
  ['M1250 316L1362 210M1405 315L1487 298M1417 331L1482 318', B, 1.800],
  ['M1092 611l8 6', B, 2.200], ['M295 684Q315 679 345 683', B, 3],
]
const groups = [
  { t: 'translate(400 330) scale(.33333)', s: upper },
  { t: 'translate(880 330) scale(.33333)', s: right },
  { t: 'translate(560 700) scale(.38265 .33333)', s: lower },
]
</script>

<template>
  <div class="screen">
    <header class="browser">
      <div class="tabstrip">
        <span class="tab-menu"><svg class="i16" :viewBox="icons.down.box" v-html="icons.down.body" /></span>
        <div v-for="(tab, i) in tabs" :key="i" class="tab" :class="{ active: tab.active, divided: i > 0 }">
          <svg class="i16" :viewBox="icons[tab.icon].box" v-html="icons[tab.icon].body" />
          <span class="tab-title" :class="{ fade: tab.fade }" :style="{ width: tab.room + 'px' }"><span v-fit="tab.w">{{ tab.title }}</span></span>
          <svg v-if="tab.active" class="i16" :viewBox="icons.speaker.box" v-html="icons.speaker.body" />
          <svg class="i16 tab-close" :viewBox="icons.close.box" v-html="icons.close.body" />
        </div>
        <svg class="i16 new-tab" :viewBox="icons.plus.box" v-html="icons.plus.body" />
        <div class="window-buttons">
          <svg v-for="n in ['min', 'restore', 'winclose']" :key="n" class="i16" :viewBox="icons[n].box" v-html="icons[n].body" />
        </div>
      </div>
      <div class="toolbar">
        <div class="nav">
          <svg class="i16" :viewBox="icons.back.box" v-html="icons.back.body" />
          <svg class="i16 dim" :viewBox="icons.forward.box" v-html="icons.forward.body" />
          <svg class="i16" :viewBox="icons.reload.box" v-html="icons.reload.body" />
        </div>
        <div class="omnibox">
          <span class="tune"><svg class="i16" :viewBox="icons.tune.box" v-html="icons.tune.body" /></span>
          <span v-fit="477" class="url"><b>scaler.com</b>/academy/mentee-dashboard/class/187617/session?joinSession=1</span>
          <svg class="i18 star" :viewBox="icons.star.box" v-html="icons.star.body" />
        </div>
        <div class="extensions">
          <svg v-for="n in ['extBlue', 'extRed', 'extDark']" :key="n" class="i16" :viewBox="icons[n].box" v-html="icons[n].body" />
          <svg class="i18 puzzle" :viewBox="icons.puzzle.box" v-html="icons.puzzle.body" />
          <span class="bar" />
          <svg class="i16" :viewBox="icons.panel.box" v-html="icons.panel.body" />
          <svg class="i20" :viewBox="icons.penguin.box" v-html="icons.penguin.body" />
          <svg class="i16" :viewBox="icons.dots.box" v-html="icons.dots.body" />
        </div>
      </div>
      <nav class="bookmarks">
        <span v-for="b in bookmarks" :key="b.text" class="bookmark" :class="{ dir: b.icon === 'folder' }">
          <svg class="i16" :viewBox="icons[b.icon].box" v-html="icons[b.icon].body" />
          <span v-fit="b.w">{{ b.text }}</span>
        </span>
        <svg class="i16 overflow" :viewBox="icons.more.box" v-html="icons.more.body" />
      </nav>
    </header>

    <div class="session">
      <main class="main">
        <div class="title-row">
          <span class="back"><svg class="i14" :viewBox="icons.back.box" v-html="icons.back.body" /></span>
          <h1><span v-fit="440">OOP - 1: Intro, Encapsulation, Abstraction | Lecture</span></h1>
          <div class="actions">
            <span class="btn"><svg class="i22" :viewBox="icons.thumb.box" v-html="icons.thumb.body" /></span>
            <span class="btn"><svg class="i20" :viewBox="icons.trophy.box" v-html="icons.trophy.body" /></span>
            <span class="btn"><svg class="i18" :viewBox="icons.gear.box" v-html="icons.gear.body" /></span>
          </div>
        </div>

        <section class="stage">
          <div class="presenter">
            <span class="code"><span v-fit="43">HJGLOPW</span></span>
            <span class="who">
              <svg class="i14" :viewBox="icons.share.box" v-html="icons.share.body" />
              <span v-fit="154.5">Mohit Sharma (Screen)</span>
            </span>
          </div>
          <div class="video">
            <div class="paper">
              <svg class="ink" viewBox="403.5 191 798.5 737">
                <path v-for="y in rules" :key="y" :d="`M403 ${y}H1203`" stroke="#e3e4eb" stroke-width="1.500" />
                <path d="M403 288H1203" stroke="#ccd3df" stroke-width="2.200" />
                <text
                  v-for="(w, i) in words" :key="i" :x="w[1]" :y="w[2]" :textLength="w[3]" lengthAdjust="spacingAndGlyphs"
                  :font-size="w[4]" :fill="w[5]" :stroke="w[5]" stroke-width=".45" :transform="`rotate(${w[6]} ${w[1]} ${w[2]})`"
                >{{ w[0] }}</text>
                <g v-for="(g, i) in groups" :key="'g' + i" :transform="g.t">
                  <path
                    v-for="(s, j) in g.s" :key="j" :d="s[0]" :stroke="s[1]" :stroke-width="s[2]" fill="none"
                    stroke-linecap="round" stroke-linejoin="round" vector-effect="non-scaling-stroke"
                  />
                </g>
                <path d="M1177 626v10l2.300-1.800 1.800 3.500 2-1-1.600-3.300h2.800z" fill="#16161c" stroke="#bbb" stroke-width=".5" />
              </svg>
            </div>
            <span class="board-back"><svg class="i16" :viewBox="icons.thinBack.box" v-html="icons.thinBack.body" /></span>
            <div class="board-tools">
              <svg class="tools" viewBox="622 208 361 37" fill="#393741" stroke="#b8b6be" stroke-width="1.400" stroke-linejoin="round">
                <g transform="rotate(45 649 226.500)"><path d="M644.500 219h9v10l-3 8h-3l-3-8zM644.500 219q0-4 4.500-4t4.500 4M653.500 217h3v11h-3M644.500 229h9" /></g>
                <g transform="rotate(45 683 226.500)"><path d="M678.500 215.500h9V231l-4.500 7-4.500-7zM678.500 220h9M678.500 231h9M681.500 220v11M684.500 220v11" /></g>
                <g transform="rotate(45 717 226.500)"><path d="M712.500 215.500h9v12l-2 5h-5l-2-5zM712.500 219h9M715 232.500h4v4l-4 1.500z" /></g>
                <g transform="rotate(45 750 226.500)"><path d="M744.500 217h11v18.500h-11zM744.500 230h11" /></g>
                <text x="773" y="235" font-size="22" textLength="20" lengthAdjust="spacingAndGlyphs">Tt</text>
                <path d="M811 219q7-6 14-2 5 3 2 9-3 3-6 8-6 4-11 0-6-8 1-15z" stroke-dasharray="2 1.300" />
                <path d="M841.500 217h19v19h-19zM842 229l5-3 5 3 4-5 4 4M842 233h18" /><circle cx="847" cy="221.500" r="1.700" />
                <path d="M881.500 220a3.500 3.500 0 0 1 7 0v6a3.500 3.500 0 0 1-7 0z" /><path d="M878 224q0 8 7 8t7-8M885 232v4" fill="none" />
                <path d="M907.500 217v19" stroke="#35333e" />
                <path d="M937 219.500L931 225.500" stroke="#fff" stroke-width="6.500" stroke-linecap="round" /><path d="M937 219.500L931 225.500" stroke="#d62a2a" stroke-width="4.200" stroke-linecap="round" />
                <path d="M924 232.500L930 227" stroke="#fff" stroke-width="1.800" /><circle cx="923" cy="233" r="3" fill="#d62a2a" stroke="#fff" stroke-width="1.300" />
                <path d="M962.500 222l5 5-5 5" fill="none" />
              </svg>
              <div class="pens">
                <i class="pen red" /><i class="pen blue" /><i class="pen green" /><i class="pen yellow" />
                <span class="pen-bar" />
                <span class="tail on">
                  <svg class="wave" viewBox="0 0 20 8"><path d="M1 6.500Q6-1 12 4q3 2.500 7 2Q12 7 10 5 6 2 1 6.500z" fill="#bbc3ce" stroke="#bbc3ce" /></svg>Tail
                </span>
                <span class="tail"><i class="dot" />No Tail</span>
              </div>
            </div>
            <div class="board-menu">
              <svg viewBox="1175 207 146 38" fill="none" stroke="#aaa8b2" stroke-width="1.500">
                <path d="M1193 222.500l-3.500 3 3.500 3M1190 225.500h8.500q3.500 0 3.500 3t-3 3h-3" />
                <path d="M1234 222.500l3.500 3-3.500 3M1237 225.500h-8.500q-3.500 0-3.500 3t3 3h3" stroke="#42404c" />
                <circle cx="1266.500" cy="226.200" r="9.700" /><path d="M1261.500 226.200h10" stroke-width="2.200" stroke-dasharray="2 2" />
                <rect x="1296" y="216" width="13" height="16" rx="2" fill="#25232f" /><path d="M1296 221h-3.500v13q0 2 2 2h10.500v-3.500" />
              </svg>
            </div>
          </div>
          <div class="stage-actions">
            <span><svg class="i16" :viewBox="icons.camOff.box" v-html="icons.camOff.body" /></span>
            <span><svg class="i16" :viewBox="icons.expand.box" v-html="icons.expand.body" /></span>
          </div>
        </section>

        <footer class="controls">
          <i class="rec" /><span class="clock"><span v-fit="59">01:13:00</span></span>
          <div class="buttons">
            <span class="btn off"><svg class="i18" :viewBox="icons.micOff.box" v-html="icons.micOff.body" /></span>
            <span class="btn off"><svg class="i20" :viewBox="icons.camOff.box" v-html="icons.camOff.body" /></span>
            <span class="btn"><svg class="i16" :viewBox="icons.full.box" v-html="icons.full.body" /></span>
            <span class="btn raise"><svg class="hand" :viewBox="icons.hand.box" v-html="icons.hand.body" /><span v-fit="76">Raise Hand</span></span>
            <span class="btn off"><svg class="i20" :viewBox="icons.shareOff.box" v-html="icons.shareOff.body" /></span>
          </div>
        </footer>
      </main>

      <aside class="side">
        <div v-for="s in sidebar" :key="s.icon" class="side-item">
          <svg class="i20" :viewBox="icons[s.icon].box" v-html="icons[s.icon].body" />
          <em v-if="s.badge">{{ s.badge }}</em>
          <span v-for="l in s.lines" :key="l[0]" class="side-label"><span v-fit="l[1]">{{ l[0] }}</span></span>
        </div>
        <span class="hangup"><svg class="phone" :viewBox="icons.phone.box" v-html="icons.phone.body" /></span>
      </aside>
    </div>

    <footer class="taskbar">
      <div class="widget">
        <svg class="stock" :viewBox="icons.stock.box" v-html="icons.stock.body" />
        <i class="count pink">1</i>
        <div class="quote"><span><span v-fit="69">Nifty midcap</span></span><span class="gain"><span v-fit="40">+0.64%</span></span></div>
      </div>
      <svg class="i24 start" :viewBox="icons.win.box" v-html="icons.win.body" />
      <div class="search">
        <svg class="i16" :viewBox="icons.search.box" v-html="icons.search.body" />
        <span v-fit="42">Search</span>
        <span class="copilot"><svg class="i20" :viewBox="icons.copilot.box" v-html="icons.copilot.body" /></span>
      </div>
      <div class="apps">
        <span v-for="(a, i) in apps" :key="i" class="app" :class="a.state">
          <svg class="i24" :viewBox="icons[a.icon].box" v-html="icons[a.icon].body" />
          <svg v-if="a.mark === 'penguin'" class="mark" :viewBox="icons.penguin.box" v-html="icons.penguin.body" />
          <i v-else-if="a.mark" class="mark letter">{{ a.mark }}</i>
          <i v-if="a.badge" class="count" :class="{ wide: a.badge.length > 1 }">{{ a.badge }}</i>
        </span>
      </div>
      <div class="tray">
        <svg class="i16" :viewBox="icons.up.box" v-html="icons.up.body" />
        <svg class="i16" :viewBox="icons.cloud.box" v-html="icons.cloud.body" />
        <svg class="i18" :viewBox="icons.sync.box" v-html="icons.sync.body" />
        <div class="lang"><span><span v-fit="24">ENG</span></span><span><span v-fit="12">IN</span></span></div>
        <svg class="s18" :viewBox="icons.wifi.box" v-html="icons.wifi.body" />
        <svg class="s18" :viewBox="icons.mute.box" v-html="icons.mute.body" />
        <svg class="s18" :viewBox="icons.battery.box" v-html="icons.battery.body" />
        <div class="date"><span><span v-fit="47">10:12 AM</span></span><span><span v-fit="54">2/15/2024</span></span></div>
        <i class="notif">11</i>
      </div>
    </footer>
  </div>
</template>

<style>
body { margin: 0; background: #272727; overflow: hidden; }
</style>

<style scoped>
.screen { width: 1680px; height: 1050px; display: flex; flex-direction: column; color: #fff; font: 11.7px/16px "Open Sans", "Noto Sans", sans-serif; }
svg { display: block; flex: none; overflow: visible; }
i, em { font-style: normal; }
.i14 { width: 14px; height: 14px; }
.i16 { width: 16px; height: 16px; }
.i18 { width: 18px; height: 18px; }
.i20 { width: 20px; height: 20px; }
.i22 { width: 22px; height: 22px; }
.i24 { width: 24px; height: 24px; }
.s18 { width: 18px; height: 16px; }
span { white-space: nowrap; }

.browser { height: 121px; background: #4d3325; box-sizing: border-box; border-bottom: 1px solid #5c483d; }
.tabstrip { display: flex; align-items: center; height: 40px; background: #2c190d; box-sizing: border-box; padding-left: 6px; color: #e3bea7; }
.tab-menu { width: 28px; height: 28px; border-radius: 10px; background: #4d3325; display: flex; align-items: center; justify-content: center; margin-right: 6px; }
.tab { display: flex; align-items: center; width: 238px; height: 34px; margin-top: 6px; padding: 0 0 6px 8px; box-sizing: border-box; position: relative; }
.tab.active { width: 232px; background: #4d3325; border-radius: 10px 10px 0 0; margin-right: 6px; color: #f5e5dc; }
.tab.active::before, .tab.active::after { content: ""; position: absolute; bottom: 0; width: 10px; height: 10px; }
.tab.active::before { left: -10px; background: radial-gradient(circle at 0 0, transparent 9.500px, #4d3325 10px); }
.tab.active::after { right: -10px; background: radial-gradient(circle at 100% 0, transparent 9.500px, #4d3325 10px); }
.tab-title { margin-left: 8px; }
.tab-title.fade { -webkit-mask: linear-gradient(90deg, #000 calc(100% - 22px), transparent); mask: linear-gradient(90deg, #000 calc(100% - 22px), transparent); }
.tab.active .tab-title { margin-right: 4px; }
.tab-close { margin-left: 5px; }
.tab.active .tab-close { margin-left: 8px; }
.tab.divided + .divided::before { content: ""; position: absolute; left: -3px; top: 6px; width: 2px; height: 16px; background: #4d3325; }
.new-tab { border-left: 2px solid #4d3325; padding-left: 8px; margin-left: -4px; }
.window-buttons { display: flex; gap: 30px; margin-left: auto; margin-right: 15px; }
.toolbar { display: flex; align-items: center; padding-top: 6px; height: 34px; color: #f0cdb9; }
.nav { display: flex; gap: 20px; width: 106px; padding-left: 14px; }
.dim { color: #8c6f61; }
.omnibox { width: 1278px; height: 34px; border-radius: 17px; background: #351f14; display: flex; align-items: center; font-size: 14px; color: #d9c6bb; }
.tune { width: 24px; height: 24px; border-radius: 50%; background: #4d3325; margin: 0 8px 0 5px; display: flex; align-items: center; justify-content: center; }
.url { font-size: 13.700px; }
.url b { font-weight: 400; color: #fff; }
.star { margin-left: auto; margin-right: 15px; }
.extensions { display: flex; align-items: center; margin-left: 18px; gap: 20px; }
.extensions .bar { width: 2px; height: 16px; background: #6a4d3d; margin: 0 -2px; }
.extensions .i20 { margin: 0 -2px; }
.extensions .puzzle { margin: 0 -1px; }
.bookmarks { display: flex; align-items: center; height: 40px; padding-left: 12px; gap: 20.400px; color: #dfc8bc; }
.bookmark { display: flex; align-items: center; gap: 6px; }
.bookmark.dir { gap: 8px; }
.overflow { margin-left: auto; margin-right: 24px; }

.session { display: flex; height: 881px; background: #272727; font-family: "Noto Sans CJK SC", "Noto Sans", sans-serif; }
.main { width: 1605px; }
.title-row { display: flex; align-items: center; height: 70px; padding: 0 15px; box-sizing: border-box; }
.back { width: 36px; height: 36px; border-radius: 10px; background: #111; display: flex; align-items: center; justify-content: center; margin-top: -9px; }
h1 { font-size: 19.300px; line-height: 30px; font-weight: 400; -webkit-text-stroke: .75px #fff; margin: -11px 0 0 5px; }
.actions { display: flex; gap: 10px; margin: -10px 0 0 auto; }
.btn { width: 44px; height: 44px; border-radius: 12px; background: #111; display: flex; align-items: center; justify-content: center; }
.stage { width: 1585px; height: 737px; margin-left: 10px; background: #060606; border-radius: 4px; display: flex; overflow: hidden; }
.presenter { width: 264px; display: flex; flex-direction: column; justify-content: flex-end; box-sizing: border-box; padding: 0 0 11px 11px; }
.code { color: #6e6e6e; font-size: 9.700px; line-height: 11px; font-weight: 700; margin: 0 0 -1px 83px; }
.who { display: flex; align-items: center; gap: 11px; font-size: 15px; line-height: 20px; -webkit-text-stroke: .45px #eee; color: #eee; }
.video { width: 1056px; background: #262630; border-radius: 6px; position: relative; display: flex; justify-content: flex-start; }
.paper { width: 798.500px; height: 737px; margin-left: 129.500px; background: #fff; }
.ink { width: 798.500px; height: 737px; font-family: Lato, "Open Sans", sans-serif; font-style: italic; font-weight: 300; overflow: hidden; }
.board-back { position: absolute; left: 10px; top: 16px; width: 36px; height: 36px; border: 1px solid #44434c; border-radius: 6px; background: #0a0912; color: #c9c8ce; display: flex; align-items: center; justify-content: center; }
.board-tools { position: absolute; left: 348px; top: 17px; width: 361px; height: 75px; background: #0b0913; border-radius: 6px; overflow: hidden; box-shadow: 0 3px 12px rgba(60, 40, 50, .18); }
.tools { width: 361px; height: 37px; font-family: "Open Sans", sans-serif; font-style: italic; font-weight: 700; border-bottom: 1px solid #3b3944; }
.pens { display: flex; align-items: center; height: 36px; padding: 0 0 1px 17px; font: 10.500px/14px "Liberation Sans", sans-serif; color: #b4b6bf; }
.pen { width: 22px; height: 22px; border-radius: 50%; margin-right: 17px; flex: none; }
.red { background: #fc0000; box-shadow: 0 0 0 1.500px #0b0913, 0 0 0 3px #53708f; }
.blue { background: #0000fb; }
.green { background: #00fb06; }
.yellow { background: #fefb04; }
.pen-bar { width: 1px; height: 37px; background: #3b3944; margin: 0 14px 0 0; flex: none; }
.tail { box-sizing: border-box; flex: none; width: 90px; height: 26px; border-radius: 13px; background: #3c3a43; display: flex; align-items: center; gap: 14px; padding-left: 17px; }
.tail.on { width: 76px; border: 1.500px solid #4c729d; background: #152031; margin-right: 14px; gap: 12px; padding-left: 13px; }
.wave { width: 20px; height: 8px; }
.dot { width: 9px; height: 9px; border-radius: 50%; background: #efeff2; }
.board-menu { position: absolute; left: 901px; top: 16px; width: 146px; height: 38px; box-sizing: border-box; background: #0c0a15; border: 1px solid #3b3944; border-radius: 6px; box-shadow: 0 2px 14px rgba(60, 40, 90, .15); }
.stage-actions { display: flex; gap: 10px; margin: 10px 10px 0 auto; }
.stage-actions span { width: 36px; height: 36px; border-radius: 9px; background: #020202; color: #e3e3e3; display: flex; align-items: center; justify-content: center; }
.controls { display: flex; height: 74px; align-items: flex-start; }
.rec { width: 13px; height: 13px; border: 1.500px solid #fff; border-radius: 50%; background: #ff0221; margin: 23px 0 0 20px; }
.clock { margin: 21px 0 0 11px; width: 586px; font-weight: 700; font-size: 15px; line-height: 20px; color: #f4112b; }
.buttons { display: flex; gap: 10px; margin-top: 20px; }
.btn.off { background: #1d1d1d; color: #8f8f8f; }
.btn.raise { width: 125px; font-size: 15.500px; gap: 8px; line-height: 20px; }
.btn.raise span { margin-top: -2px; -webkit-text-stroke: .2px #fff; }
.hand { width: 16px; height: 22px; }
.side { width: 75px; box-sizing: border-box; border-left: 1px solid #393939; background: #252525; display: flex; flex-direction: column; align-items: center; padding-top: 15px; }
.side-item { display: flex; flex-direction: column; align-items: center; padding-bottom: 32px; position: relative; font-size: 12.500px; line-height: 16px; -webkit-text-stroke: .2px #fff; }
.side-item svg { margin-bottom: 4px; }
.side-label { height: 16px; }
.side-item em { position: absolute; left: 50%; margin-left: 3px; top: -5px; width: 24px; height: 24px; border-radius: 50%; background: #ff0221; font-size: 11.500px; line-height: 23px; text-align: center; }
.hangup { width: 44px; height: 44px; border-radius: 12px; background: #ff0221; display: flex; align-items: center; justify-content: center; margin-top: auto; margin-bottom: 10px; }
.phone { width: 20px; height: 12px; }

.taskbar { display: flex; align-items: center; height: 48px; background: #1f1f1f; }
.widget { display: flex; position: relative; width: 296px; padding-left: 21px; }
.stock { width: 22px; height: 14px; margin: 16px 8px 0 0; }
.quote, .lang, .date { display: flex; flex-direction: column; }
.gain { color: #6ccb5f; }
.count { position: absolute; min-width: 16px; height: 16px; border-radius: 9px; background: #4cc2ff; color: #111; font-size: 11px; line-height: 16px; text-align: center; }
.pink { left: 31px; top: -1px; background: #ff99a4; }
.search { width: 219px; height: 32px; border-radius: 17px; background: #333; border: 1px solid #3d3d3d; box-sizing: border-box; margin-left: 12px; display: flex; align-items: center; padding-left: 10px; font-size: 13.500px; color: #ccc; gap: 10px; }
.copilot { width: 56px; height: 28px; border-radius: 14px; background: #222; margin: 0 1px 0 auto; display: flex; align-items: center; justify-content: center; }
.apps { display: flex; margin-left: 5px; gap: 4px; }
.app { width: 40px; height: 40px; display: flex; align-items: center; justify-content: center; border-radius: 4px; position: relative; }
.app.active { background: #333; }
.app.active::after, .app.open::after { content: ""; position: absolute; bottom: 1px; left: 12px; width: 16px; height: 3px; border-radius: 2px; background: #4cc2ff; }
.app.open::after { left: 17px; width: 6px; background: #8c8c8c; }
.app .count { left: 21px; top: 3px; }
.app .count.wide { width: 20px; left: 19px; }
.mark { position: absolute; left: 21px; top: 3px; width: 15px; height: 15px; }
.letter { border-radius: 50%; background: #33691e; color: #fff; font-size: 10px; line-height: 15px; text-align: center; }
.tray { display: flex; align-items: center; gap: 8px; margin-left: auto; margin-right: 19px; }
.lang { align-items: center; margin: 0 8px 0 5px; }
.s18 { margin-right: -2px; }
.date { align-items: flex-end; margin-left: 9px; width: 54px; }
.notif { width: 19px; height: 19px; border-radius: 50%; background: #4cc2ff; color: #111; font-size: 11px; line-height: 19px; text-align: center; margin-left: -4px; }
</style>
